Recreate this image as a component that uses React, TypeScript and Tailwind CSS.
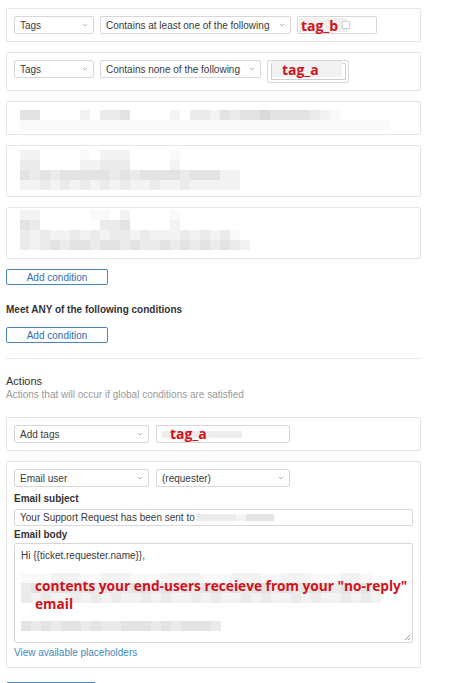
import React from 'react';

const shade: Record<string, string> = {
  '.': 'bg-transparent',
  a: 'bg-[#fafafa]',
  b: 'bg-[#f3f3f3]',
  c: 'bg-[#ebebeb]',
  d: 'bg-[#e3e3e3]',
  e: 'bg-[#dadada]',
};

function Pixels({ rows }: { rows: string[] }) {
  return (
    <div className="flex flex-col">
      {rows.map((row, r) => (
        <div key={r} className="flex">
          {row.split('').map((ch, i) => (
            <div key={i} className={`w-[10px] h-[10px] ${shade[ch]}`} />
          ))}
        </div>
      ))}
    </div>
  );
}

function Chevron() {
  return (
    <svg width="6" height="4" viewBox="0 0 6 4" className="shrink-0">
      <path d="M1 1 L3 3 L5 1" fill="none" stroke="#a0a0a0" strokeWidth="0.8" />
    </svg>
  );
}

function Select({ label, w }: { label: string; w: string }) {
  return (
    <div className={`${w} h-[18px] shrink-0 border border-[#d7d7d7] rounded-[2px] bg-white flex items-center justify-between pl-[5px] pr-[5px] text-[10px] text-[#3a3a3a]`}>
      <span>{label}</span>
      <Chevron />
    </div>
  );
}

function RedTag({ text }: { text: string }) {
  return (
    <span className="text-[14px] leading-none font-bold text-[#d0121b] [font-family:'Open_Sans',sans-serif]">
      {text}
    </span>
  );
}

function Card({ children, className = '' }: { children: React.ReactNode; className?: string }) {
  return <div className={`border border-[#e6e6e6] rounded-[2px] bg-white ${className}`}>{children}</div>;
}

function OutlineButton({ label }: { label: string }) {
  return (
    <div className="w-[102px] h-[16px] border border-[#4a84c2] rounded-[2px] flex items-center justify-center text-[10px] text-[#2f6db3]">
      {label}
    </div>
  );
}

export default function App() {
  return (
    <div className="w-[451px] h-[683px] overflow-hidden bg-white pl-[6px] pt-[8px] [font-family:'Liberation_Sans',Arial,sans-serif]">
      <div className="w-[415px] flex flex-col gap-[10px]">
        {/* conditions */}
        <Card className="h-[34px] p-[7px] flex gap-[6px] items-start">
          <Select label="Tags" w="w-[80px]" />
          <Select label="Contains at least one of the following" w="w-[191px]" />
          <div className="relative w-[80px] h-[18px] border border-[#d7d7d7] rounded-[2px]">
            <div className="absolute left-[1px] top-[1px] w-[48px] h-[14px] bg-[#f0f0f0]" />
            <div className="absolute left-[44px] top-[4px] w-[8px] h-[8px] border border-[#d0d0d0] bg-white" />
            <div className="absolute left-[3px] top-[-3px]">
              <RedTag text="tag_b" />
            </div>
          </div>
        </Card>

        <Card className="h-[39px] p-[7px] flex gap-[6px] items-start">
          <Select label="Tags" w="w-[80px]" />
          <Select label="Contains none of the following" w="w-[161px]" />
          <div className="relative w-[82px] h-[23px] border border-[#d7d7d7] rounded-[2px]">
            <div className="absolute left-[3px] top-[2px] w-[75px] h-[17px] border border-[#cfcfcf] rounded-[1px]" />
            <div className="absolute left-[4px] top-[0px] w-[70px] h-[16px] bg-[#f2f2f2]" />
            <div className="absolute left-[14px] top-[-3px]">
              <RedTag text="tag_a" />
            </div>
          </div>
        </Card>

        <Card className="h-[34px] pl-[13px] pt-[8px]">
          <Pixels
            rows={[
              'dd....b.ccd....b.ccbdcddeddddcba',
              'aaaaaaaaaaaaaaaaaaaaaaaaaaaaaaaaaaaaa',
            ]}
          />
        </Card>

        <Card className="h-[52px] pl-[13px] pt-[4px]">
          <Pixels
            rows={[
              'bb....a.bbb....a',
              'cc....bbccc....b',
              'dcdcdddddcdcddddcdddbb',
              'bbcbcbcbcbcbbcbbcbbbbb',
            ]}
          />
        </Card>

        <Card className="h-[52px] pl-[13px] pt-[2px]">
          <Pixels
            rows={[
              'bb.....aa.b....a',
              'dc......ccd....b',
              'cbcbbcbcbccbcbbbcbcbca',
              'cbcdcddcddcdccdcdcdcdcb',
            ]}
          />
        </Card>
      </div>

      <div className="mt-[10px]">
        <OutlineButton label="Add condition" />
      </div>
      <div className="mt-[19px] text-[10px] font-bold text-[#333] leading-[12px]">Meet ANY of the following conditions</div>
      <div className="mt-[11px]">
        <OutlineButton label="Add condition" />
      </div>

      <div className="mt-[15px] w-[415px] h-px bg-[#e8e8e8]" />

      <div className="mt-[15px] text-[11px] leading-[14px] text-[#333]">Actions</div>
      <div className="mt-[1px] text-[10px] leading-[12px] text-[#9a9a9a]">Actions that will occur if global conditions are satisfied</div>

      <div className="mt-[16px] w-[415px] flex flex-col gap-[10px]">
        <Card className="h-[34px] p-[7px] flex gap-[7px] items-start">
          <Select label="Add tags" w="w-[135px]" />
          <div className="relative w-[134px] h-[18px] border border-[#d7d7d7] rounded-[2px]">
            <div className="absolute left-[5px] top-[5px] w-[80px] h-[7px] bg-[#ededed]" />
            <div className="absolute left-[13px] top-[-4px]">
              <RedTag text="tag_a" />
            </div>
          </div>
        </Card>

        <Card className="h-[207px] p-[7px] flex flex-col">
          <div className="flex gap-[7px]">
            <Select label="Email user" w="w-[135px]" />
            <Select label="(requester)" w="w-[134px]" />
          </div>
          <div className="mt-[6px] text-[10px] leading-[12px] font-bold text-[#333]">Email subject</div>
          <div className="mt-[4px] h-[17px] border border-[#d7d7d7] rounded-[2px] flex items-center pl-[5px] text-[10px] text-[#3a3a3a]">
            <span>Your Support Request has been sent to</span>
            <div className="ml-[1px] w-[78px] h-[7px] flex">
              <div className="w-[40px] bg-[#ebebeb]" />
              <div className="w-[10px] bg-[#f4f4f4]" />
              <div className="w-[28px] bg-[#e4e4e4]" />
            </div>
          </div>
          <div className="mt-[3px] text-[10px] leading-[12px] font-bold text-[#333]">Email body</div>
          <div className="relative mt-[2px] h-[100px] shrink-0 border border-[#d7d7d7] rounded-[2px] pl-[6px] pt-[6px] text-[10px] text-[#3a3a3a]">
            <div className="leading-[12px]">Hi {'{{ticket.requester.name}}'},</div>
            <div className="relative mt-[11px] h-[30px]">
              <div className="absolute left-0 top-0">
                <Pixels
                  rows={[
                    'aaabbbaabbbaaabbbbaaabbbaabbbaaabba',
                    'cdcddcdcdccddcdcdcddcdcddcdcdddcdcdb',
                    'cbcbbcbcbcbbcbcbbcbcbbcbcbbcbcbbcbcb',
                  ]}
                />
              </div>
              <div className="absolute left-[14px] top-[4px] w-[385px] text-[13.7px] leading-[18px] font-bold text-[#d0121b] [font-family:'Open_Sans',sans-serif]">
                contents your end-users receieve from your "no-reply" email
              </div>
            </div>
            <div className="mt-[18px]">
              <Pixels rows={['dcdcddcdccdddcdcdddc']} />
            </div>
            <svg width="7" height="7" viewBox="0 0 7 7" className="absolute right-[1px] bottom-[1px]">
              <path d="M1 6 L6 1 M4 6 L6 4" stroke="#8a8a8a" strokeWidth="0.8" />
            </svg>
          </div>
          <div className="mt-[4px] text-[10px] leading-[12px] text-[#3b8bbd]">View available placeholders</div>
        </Card>
      </div>

      <div className="mt-[14px] w-[90px] h-[16px] border border-[#4a84c2] rounded-[2px]" />
    </div>
  );
}
